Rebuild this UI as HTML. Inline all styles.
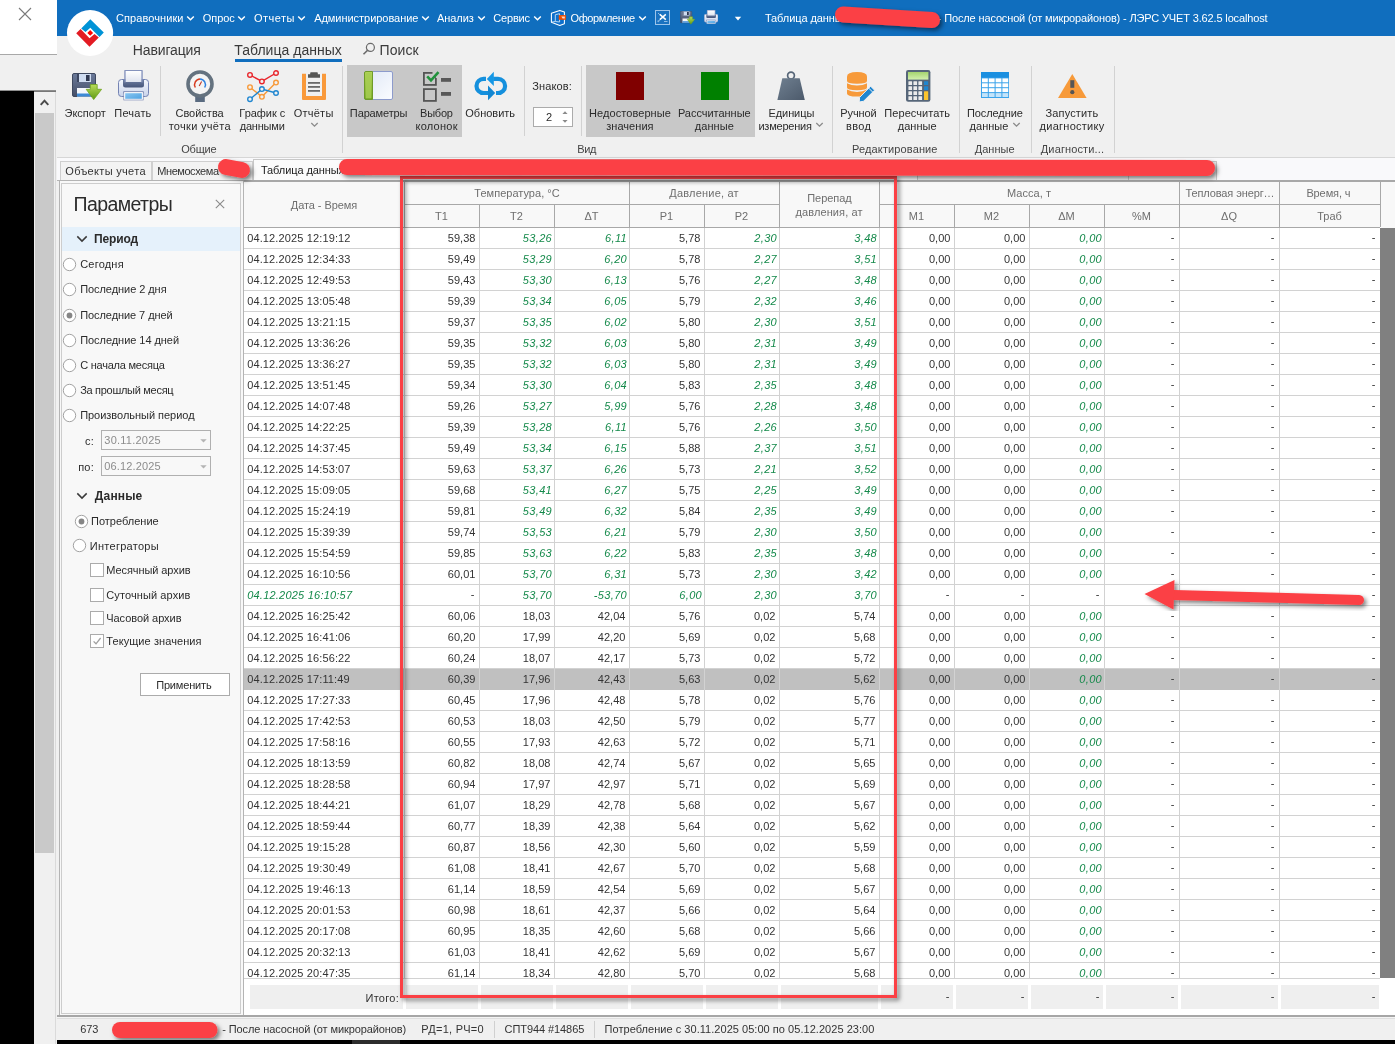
<!DOCTYPE html><html lang="ru"><head><meta charset="utf-8"><title>ЛЭРС УЧЕТ</title><style>
html,body{margin:0;padding:0}
body{width:1395px;height:1044px;position:relative;overflow:hidden;background:#f0f0f0;font-family:"Liberation Sans","DejaVu Sans",sans-serif;font-size:11px;color:#2b2b2b;line-height:13px;will-change:transform}
div,span,svg{position:absolute;box-sizing:border-box;white-space:nowrap}
.c{text-align:center}
.r{text-align:right}
.w{color:#fff}
.g{color:#14894a;font-style:italic}
.hd{color:#6e6e6e}
.cell{height:21px;line-height:21px;top:0;color:#333}
.cell.g{color:#14894a}
.row{left:0;width:1136px;height:21px}
</style></head><body>
<div style="left:0px;top:0px;width:57px;height:54px;background:#ffffff;"></div>
<svg style="left:17px;top:6px" width="16" height="16" viewBox="0 0 16 16"><path d="M2 2 L14 14 M14 2 L2 14" stroke="#7a7a7a" stroke-width="1.1" fill="none"/></svg>
<div style="left:0px;top:54px;width:57px;height:1px;background:#a8a8a8;"></div>
<div style="left:0px;top:55px;width:57px;height:35px;background:#f0f0f0;"></div>
<div style="left:0px;top:91px;width:34px;height:953px;background:#000000;"></div>
<div style="left:34px;top:91px;width:22px;height:953px;background:#f0f0f0;"></div>
<div style="left:55px;top:92px;width:1px;height:952px;background:#dadada;"></div>
<div style="left:0px;top:90px;width:56px;height:1px;background:#8e8e8e;"></div>
<div style="left:34px;top:91px;width:22px;height:1px;background:#777777;"></div>
<svg style="left:38px;top:97px" width="14" height="10" viewBox="0 0 14 10"><path d="M2.7 7.9 L6.5 3.7 L10.3 7.9" stroke="#4a4a4a" stroke-width="2" fill="none"/></svg>
<div style="left:35px;top:113px;width:19px;height:740px;background:#c9c9c9;"></div>
<div style="left:57px;top:0px;width:1338px;height:36px;background:#106ebe;"></div>
<div style="top:11.13px;height:14px;line-height:14px;color:#fff;left:115.95px;letter-spacing:0.087px;">Справочники</div>
<svg style="left:186.2px;top:14.5px" width="9" height="7" viewBox="0 0 9 7"><path d="M1.2 1.5 L4.5 4.8 L7.8 1.5" stroke="#fff" stroke-width="1.5" fill="none"/></svg>
<div style="top:11.13px;height:14px;line-height:14px;color:#fff;left:202.75px;letter-spacing:-0.050px;">Опрос</div>
<svg style="left:237.0px;top:14.5px" width="9" height="7" viewBox="0 0 9 7"><path d="M1.2 1.5 L4.5 4.8 L7.8 1.5" stroke="#fff" stroke-width="1.5" fill="none"/></svg>
<div style="top:11.13px;height:14px;line-height:14px;color:#fff;left:253.95px;letter-spacing:0.496px;">Отчеты</div>
<svg style="left:297.3px;top:14.5px" width="9" height="7" viewBox="0 0 9 7"><path d="M1.2 1.5 L4.5 4.8 L7.8 1.5" stroke="#fff" stroke-width="1.5" fill="none"/></svg>
<div style="top:11.13px;height:14px;line-height:14px;color:#fff;left:314.15px;letter-spacing:-0.035px;">Администрирование</div>
<svg style="left:420.7px;top:14.5px" width="9" height="7" viewBox="0 0 9 7"><path d="M1.2 1.5 L4.5 4.8 L7.8 1.5" stroke="#fff" stroke-width="1.5" fill="none"/></svg>
<div style="top:11.13px;height:14px;line-height:14px;color:#fff;left:437.05px;letter-spacing:-0.089px;">Анализ</div>
<svg style="left:476.5px;top:14.5px" width="9" height="7" viewBox="0 0 9 7"><path d="M1.2 1.5 L4.5 4.8 L7.8 1.5" stroke="#fff" stroke-width="1.5" fill="none"/></svg>
<div style="top:11.13px;height:14px;line-height:14px;color:#fff;left:493.25px;letter-spacing:-0.178px;">Сервис</div>
<svg style="left:532.5px;top:14.5px" width="9" height="7" viewBox="0 0 9 7"><path d="M1.2 1.5 L4.5 4.8 L7.8 1.5" stroke="#fff" stroke-width="1.5" fill="none"/></svg>
<div style="top:11.13px;height:14px;line-height:14px;color:#fff;left:570.55px;letter-spacing:-0.408px;">Оформление</div>
<svg style="left:638.1px;top:14.5px" width="9" height="7" viewBox="0 0 9 7"><path d="M1.2 1.5 L4.5 4.8 L7.8 1.5" stroke="#fff" stroke-width="1.5" fill="none"/></svg>
<div style="top:11.13px;height:14px;line-height:14px;color:#fff;left:764.95px;letter-spacing:-0.091px;">Таблица данных</div>
<div style="top:11.13px;height:14px;line-height:14px;color:#fff;left:937.85px;letter-spacing:-0.147px;">- После насосной (от микрорайонов) - ЛЭРС УЧЕТ 3.62.5 localhost</div>
<div style="left:57px;top:36px;width:1338px;height:121px;background:#f0f0f0;"></div>
<div style="top:41.06px;height:18px;line-height:18px;font-size:14px;color:#3a3a3a;left:132.85px;letter-spacing:-0.140px;">Навигация</div>
<div style="top:41.06px;height:18px;line-height:18px;font-size:14px;color:#3a3a3a;left:234.25px;letter-spacing:0.024px;">Таблица данных</div>
<div style="left:234.5px;top:58.5px;width:107.5px;height:3px;background:#106ebe;"></div>
<div style="top:41.06px;height:18px;line-height:18px;font-size:14px;color:#3a3a3a;left:379.55px;letter-spacing:0.061px;">Поиск</div>
<svg style="left:361.5px;top:41.7px" width="14" height="14" viewBox="0 0 14 14"><circle cx="8.4" cy="5.4" r="4" stroke="#6a6a6a" stroke-width="1.2" fill="none"/><path d="M5.6 8.2 L1.5 12.3" stroke="#6a6a6a" stroke-width="1.6"/></svg>
<div style="left:57px;top:157px;width:1338px;height:1px;background:#d6d6d6;"></div>
<svg style="left:66px;top:9px" width="48" height="48" viewBox="0 0 48 48"><circle cx="24.05" cy="24" r="23.1" fill="#ffffff"/><path d="M24.3 10.2 L37.8 23.6 L33.5 28 L24.3 18.8 L19.5 23.1 L15.2 19.5 Z" fill="#0093d6"/><path d="M14.6 20 L23.5 29.2 L28.5 24.9 L32.8 28.5 L23.5 37.8 L10.2 24.3 Z" fill="#e31b23"/><path d="M21.3 23.9 L24.2 21 L27.1 23.9 L24.2 26.8 Z" fill="#ff0000"/></svg>
<div style="left:347px;top:65px;width:115px;height:71.5px;background:#c8c8c8;"></div>
<div style="left:586px;top:65px;width:169px;height:71.5px;background:#c8c8c8;"></div>
<div style="left:160px;top:66px;width:1px;height:70px;background:#d2d2d2;"></div>
<div style="left:342px;top:66px;width:1px;height:87px;background:#d2d2d2;"></div>
<div style="left:524px;top:66px;width:1px;height:70px;background:#d2d2d2;"></div>
<div style="left:581px;top:66px;width:1px;height:70px;background:#d2d2d2;"></div>
<div style="left:832px;top:66px;width:1px;height:87px;background:#d2d2d2;"></div>
<div style="left:959px;top:66px;width:1px;height:87px;background:#d2d2d2;"></div>
<div style="left:1031px;top:66px;width:1px;height:87px;background:#d2d2d2;"></div>
<div style="left:1114px;top:66px;width:1px;height:87px;background:#d2d2d2;"></div>
<div style="top:106.13px;height:14px;line-height:14px;left:-64.80px;width:300px;text-align:center;letter-spacing:0.010px;">Экспорт</div>
<div style="top:106.13px;height:14px;line-height:14px;left:-17.09px;width:300px;text-align:center;letter-spacing:0.211px;">Печать</div>
<div style="top:106.13px;height:14px;line-height:14px;left:49.60px;width:300px;text-align:center;">Свойства</div>
<div style="top:119.13px;height:14px;line-height:14px;left:49.75px;width:300px;text-align:center;letter-spacing:0.299px;">точки учёта</div>
<div style="top:106.13px;height:14px;line-height:14px;left:112.29px;width:300px;text-align:center;letter-spacing:-0.030px;">График с</div>
<div style="top:119.13px;height:14px;line-height:14px;left:112.20px;width:300px;text-align:center;letter-spacing:-0.200px;">данными</div>
<div style="top:106.13px;height:14px;line-height:14px;left:163.63px;width:300px;text-align:center;letter-spacing:0.252px;">Отчёты</div>
<div style="top:106.13px;height:14px;line-height:14px;left:228.64px;width:300px;text-align:center;letter-spacing:-0.126px;">Параметры</div>
<div style="top:106.13px;height:14px;line-height:14px;left:286.37px;width:300px;text-align:center;letter-spacing:-0.256px;">Выбор</div>
<div style="top:119.13px;height:14px;line-height:14px;left:286.64px;width:300px;text-align:center;letter-spacing:0.275px;">колонок</div>
<div style="top:106.13px;height:14px;line-height:14px;left:340.19px;width:300px;text-align:center;letter-spacing:-0.013px;">Обновить</div>
<div style="top:106.13px;height:14px;line-height:14px;left:479.94px;width:300px;text-align:center;letter-spacing:0.074px;">Недостоверные</div>
<div style="top:119.13px;height:14px;line-height:14px;left:479.92px;width:300px;text-align:center;letter-spacing:0.048px;">значения</div>
<div style="top:106.13px;height:14px;line-height:14px;left:564.29px;width:300px;text-align:center;letter-spacing:-0.029px;">Рассчитанные</div>
<div style="top:119.13px;height:14px;line-height:14px;left:564.36px;width:300px;text-align:center;letter-spacing:0.115px;">данные</div>
<div style="top:106.13px;height:14px;line-height:14px;left:641.36px;width:300px;text-align:center;letter-spacing:-0.089px;">Единицы</div>
<div style="top:106.13px;height:14px;line-height:14px;left:708.46px;width:300px;text-align:center;letter-spacing:-0.084px;">Ручной</div>
<div style="top:119.13px;height:14px;line-height:14px;left:708.69px;width:300px;text-align:center;letter-spacing:0.385px;">ввод</div>
<div style="top:106.13px;height:14px;line-height:14px;left:767.24px;width:300px;text-align:center;letter-spacing:0.075px;">Пересчитать</div>
<div style="top:119.13px;height:14px;line-height:14px;left:767.22px;width:300px;text-align:center;letter-spacing:0.032px;">данные</div>
<div style="top:106.13px;height:14px;line-height:14px;left:844.86px;width:300px;text-align:center;letter-spacing:-0.075px;">Последние</div>
<div style="top:106.13px;height:14px;line-height:14px;left:921.98px;width:300px;text-align:center;letter-spacing:0.150px;">Запустить</div>
<div style="top:119.13px;height:14px;line-height:14px;left:922.03px;width:300px;text-align:center;letter-spacing:0.263px;">диагностику</div>
<div style="top:119.13px;height:14px;line-height:14px;left:758.45px;letter-spacing:-0.220px;">измерения</div>
<div style="top:119.13px;height:14px;line-height:14px;left:969.55px;letter-spacing:0.032px;">данные</div>
<div style="top:142.03px;height:14px;line-height:14px;color:#444;left:48.80px;width:300px;text-align:center;letter-spacing:-0.194px;">Общие</div>
<div style="top:142.03px;height:14px;line-height:14px;color:#444;left:436.68px;width:300px;text-align:center;letter-spacing:-0.433px;">Вид</div>
<div style="top:142.03px;height:14px;line-height:14px;color:#444;left:744.86px;width:300px;text-align:center;letter-spacing:0.122px;">Редактирование</div>
<div style="top:142.03px;height:14px;line-height:14px;color:#444;left:844.61px;width:300px;text-align:center;letter-spacing:0.027px;">Данные</div>
<div style="top:142.03px;height:14px;line-height:14px;color:#444;left:922.46px;width:300px;text-align:center;letter-spacing:0.128px;">Диагности...</div>
<svg style="left:309.7px;top:121.8px" width="9" height="6" viewBox="0 0 9 6"><path d="M1.3 1 L4.5 4.2 L7.7 1" stroke="#8a8a8a" stroke-width="1.3" fill="none"/></svg>
<svg style="left:814.7px;top:121.8px" width="9" height="6" viewBox="0 0 9 6"><path d="M1.3 1 L4.5 4.2 L7.7 1" stroke="#8a8a8a" stroke-width="1.3" fill="none"/></svg>
<svg style="left:1011.6px;top:121.8px" width="9" height="6" viewBox="0 0 9 6"><path d="M1.3 1 L4.5 4.2 L7.7 1" stroke="#8a8a8a" stroke-width="1.3" fill="none"/></svg>
<div style="top:78.93px;height:14px;line-height:14px;left:532.15px;letter-spacing:0.159px;">Знаков:</div>
<div style="left:533px;top:107px;width:40px;height:20px;background:#ffffff;border:1px solid #ababab;"></div>
<div style="top:110.13px;height:14px;line-height:14px;left:546.05px;letter-spacing:0.282px;">2</div>
<svg style="left:560.9px;top:109px" width="8" height="16" viewBox="0 0 8 16"><path d="M1.4 5 L4 2.2 L6.6 5 Z M1.4 10.9 L4 13.7 L6.6 10.9 Z" fill="#8a8a8a"/></svg>
<div style="left:616px;top:72px;width:28px;height:28px;background:#800000;"></div>
<div style="left:701px;top:72px;width:28px;height:28px;background:#008000;"></div>
<svg style="left:0;top:0" width="0" height="0"><defs><linearGradient id="gfl" x1="0" y1="0" x2="0" y2="1"><stop offset="0" stop-color="#6b7a9a"/><stop offset="1" stop-color="#454f68"/></linearGradient><linearGradient id="ggr" x1="0" y1="0" x2="0" y2="1"><stop offset="0" stop-color="#b9dc5a"/><stop offset="1" stop-color="#5f9a12"/></linearGradient><linearGradient id="gpa" x1="0" y1="0" x2="0" y2="1"><stop offset="0" stop-color="#ffffff"/><stop offset="1" stop-color="#dfe4ef"/></linearGradient><linearGradient id="gpb" x1="0" y1="0" x2="0" y2="1"><stop offset="0" stop-color="#f4f7fd"/><stop offset="1" stop-color="#c9d3ea"/></linearGradient><linearGradient id="gsl" x1="0" y1="0" x2="0" y2="1"><stop offset="0" stop-color="#6c7ca0"/><stop offset="1" stop-color="#46557a"/></linearGradient><linearGradient id="gbl" x1="0" y1="0" x2="1" y2="1"><stop offset="0" stop-color="#8cc8f2"/><stop offset="1" stop-color="#4a9fe0"/></linearGradient><linearGradient id="gwt" x1="0" y1="0" x2="1" y2="1"><stop offset="0" stop-color="#6f7f90"/><stop offset="1" stop-color="#4c5a6b"/></linearGradient><linearGradient id="gpn" x1="0" y1="0" x2="1" y2="1"><stop offset="0" stop-color="#dfe7f6"/><stop offset="1" stop-color="#fbfcff"/></linearGradient><linearGradient id="gdp" x1="0" y1="0" x2="0" y2="1"><stop offset="0" stop-color="#a5d46f"/><stop offset="1" stop-color="#d3f0ae"/></linearGradient></defs></svg>
<svg style="left:72px;top:73px" width="31.0" height="28.0" viewBox="0 0 31 28"><rect x="0.5" y="0.5" width="23" height="23" rx="1.5" fill="url(#gfl)" stroke="#3f4960"/><rect x="5" y="1" width="14" height="8" fill="#cfdcf0"/><rect x="5" y="1" width="2" height="8" fill="#3d4761"/><rect x="14" y="2" width="3.6" height="6" fill="#2f3850"/><rect x="5" y="15" width="14" height="8.5" fill="#f4f7fc"/><rect x="5" y="20.5" width="14" height="3" fill="#3d8ad6"/><path d="M18.3 11.5 L25.2 11.5 L25.2 16.3 L29.6 16.3 L21.7 26.6 L14.2 16.3 L18.3 16.3 Z" fill="url(#ggr)" stroke="#6fa31c" stroke-width="0.8"/></svg>
<svg style="left:117.5px;top:69.5px" width="31.0" height="31.0" viewBox="0 0 31 31"><rect x="7" y="0.5" width="17" height="12" fill="url(#gpa)" stroke="#8593bd" stroke-width="1"/><rect x="0.5" y="9.5" width="30" height="17" rx="3" fill="url(#gpb)" stroke="#7483b3"/><path d="M5 10 H26 V15 Q26 17.5 23.5 17.5 H7.5 Q5 17.5 5 15 Z" fill="url(#gsl)"/><rect x="7.5" y="1" width="16" height="11" fill="url(#gpa)"/><path d="M7 12.5 V0.5 H24 V12.5" fill="none" stroke="#8593bd"/><rect x="5.5" y="21.5" width="20" height="2" fill="#5b6b97"/><rect x="6.5" y="22.5" width="18" height="7" fill="url(#gbl)" stroke="#ffffff" stroke-width="1.4"/><rect x="5.8" y="21.8" width="19.4" height="8.2" fill="none" stroke="#6b7aaa" stroke-width="0.6"/></svg>
<svg style="left:186px;top:69.5px" width="28" height="32" viewBox="0 0 28 32" ><rect x="9.2" y="24" width="9.6" height="8" fill="#5a6b80"/><circle cx="14" cy="14" r="12" fill="#f4f4f4" stroke="#64727f" stroke-width="3.6"/><path d="M9.3 17.5 A5.8 5.8 0 0 1 14 8.9" fill="none" stroke="#d63a1e" stroke-width="1.5"/><path d="M14 8.9 A5.8 5.8 0 0 1 18.7 17.5" fill="none" stroke="#2b7fe0" stroke-width="1.5"/><path d="M13.2 16 L15.6 11.6" stroke="#c03a2a" stroke-width="1.1"/></svg>
<svg style="left:246px;top:70px" width="34" height="34" viewBox="0 0 34 34" ><path d="M4 17.2 L15.9 26.8 L30 12.6" fill="none" stroke="#f79a3a" stroke-width="1.4"/><circle cx="4" cy="17.2" r="2.3" fill="#f0f0f0" stroke="#f79a3a" stroke-width="1.4"/><circle cx="15.9" cy="26.8" r="2.3" fill="#f0f0f0" stroke="#f79a3a" stroke-width="1.4"/><circle cx="30" cy="12.6" r="2.3" fill="#f0f0f0" stroke="#f79a3a" stroke-width="1.4"/><path d="M4 29.2 L15.9 19.1 L30 23" fill="none" stroke="#1f86d0" stroke-width="1.4"/><circle cx="4" cy="29.2" r="2.3" fill="#f0f0f0" stroke="#1f86d0" stroke-width="1.4"/><circle cx="15.9" cy="19.1" r="2.3" fill="#f0f0f0" stroke="#1f86d0" stroke-width="1.4"/><circle cx="30" cy="23" r="2.3" fill="#f0f0f0" stroke="#1f86d0" stroke-width="1.4"/><path d="M4 4.9 L15.9 11.4 L30 3" fill="none" stroke="#e8262c" stroke-width="1.4"/><circle cx="4" cy="4.9" r="2.3" fill="#f0f0f0" stroke="#e8262c" stroke-width="1.4"/><circle cx="15.9" cy="11.4" r="2.3" fill="#f0f0f0" stroke="#e8262c" stroke-width="1.4"/><circle cx="30" cy="3" r="2.3" fill="#f0f0f0" stroke="#e8262c" stroke-width="1.4"/></svg>
<svg style="left:296px;top:66px" width="36" height="38" viewBox="0 0 36 38" ><path d="M6 7.8 H10 V30 H26 V7.8 H30 V33 Q30 34 29 34 H7 Q6 34 6 33 Z" fill="#f9993a"/><path d="M12 8.2 H14.2 V7 Q14.2 6.2 15 6.2 H21 Q21.8 6.2 21.8 7 V8.2 H24 V11.8 H12 Z" fill="#565654"/><rect x="12" y="16" width="12" height="1.8" fill="#6a6a6a"/><rect x="12" y="20" width="12" height="1.8" fill="#6a6a6a"/><rect x="12" y="24" width="12" height="1.8" fill="#6a6a6a"/></svg>
<svg style="left:364px;top:71px" width="29" height="29" viewBox="0 0 29 29" ><rect x="0.5" y="0.5" width="28" height="28" rx="1.5" fill="url(#gpn)" stroke="#8d9bcc"/><path d="M2 0.5 H8.5 V28.5 H2 Q0.5 28.5 0.5 27 V2 Q0.5 0.5 2 0.5 Z" fill="url(#ggr)" stroke="#6f9a2a"/><rect x="1.5" y="1.5" width="6" height="26" fill="#a6cc52" opacity="0.9"/></svg>
<svg style="left:415px;top:66px" width="42" height="38" viewBox="0 0 42 38" ><rect x="8.9" y="6.9" width="12" height="12" fill="none" stroke="#555555" stroke-width="1.8"/><rect x="8.9" y="23.1" width="12" height="11.8" fill="none" stroke="#555555" stroke-width="1.8"/><rect x="26" y="12" width="10" height="3.8" fill="#585858"/><rect x="26" y="26" width="10" height="3.8" fill="#585858"/><path d="M17.5 6.9 H22 V12" stroke="#c8c8c8" stroke-width="2.4" fill="none"/><path d="M12.2 10.4 L16 14.3 L23.5 6.2" fill="none" stroke="#21923c" stroke-width="2.6"/></svg>
<svg style="left:470px;top:66px" width="42" height="38" viewBox="0 0 42 38" ><path d="M16 12.8 H13.6 A7.1 7.1 0 0 0 13.6 27 H18.6" fill="none" stroke="#1590dd" stroke-width="4.2"/><path d="M18 19.6 L25.2 27.1 L18 34.2 Z" fill="#1387d2"/><path d="M26 27 H28 A7.1 7.1 0 0 0 28 12.8 H23.2" fill="none" stroke="#1590dd" stroke-width="4.2"/><path d="M23.8 5.8 L16.8 12.9 L23.8 20 Z" fill="#1597e5"/></svg>
<svg style="left:777px;top:71px" width="28" height="29" viewBox="0 0 28 29" ><circle cx="14" cy="4.6" r="3.4" fill="none" stroke="#566577" stroke-width="1.7"/><path d="M5.3 7.3 H22.7 L27.8 29 H0.4 Z" fill="url(#gwt)"/></svg>
<svg style="left:847px;top:71.7px" width="29" height="31" viewBox="0 0 29 31" ><path d="M0 4.5 Q0 0 10 0 Q20 0 20 4.5 V9 Q20 11.8 10 11.8 Q0 11.8 0 9 Z" fill="#f79a3a"/><path d="M0 11.2 Q4 13.6 10 13.6 Q16 13.6 20 11.2 V15.5 Q20 18.2 10 18.2 Q0 18.2 0 15.5 Z" fill="#f79a3a"/><path d="M0 17.6 Q4 20 10 20 Q16 20 20 17.6 V21.5 Q20 24.6 10 24.6 Q0 24.6 0 21.5 Z" fill="#f79a3a"/><path d="M23.6 14.2 L27.6 18.2 L16.5 29.3 L12.2 30 L12.6 25.4 Z" fill="#1f86d0" stroke="#f0f0f0" stroke-width="1"/><path d="M21.8 16.2 L25.6 20" stroke="#f0f0f0" stroke-width="1"/></svg>
<svg style="left:906px;top:70px" width="25" height="32" viewBox="0 0 25 32" ><rect x="0" y="0" width="24.4" height="31.8" rx="2.2" fill="#566679"/><rect x="2" y="2" width="20.4" height="7.6" fill="url(#gdp)"/><rect x="2.4" y="11.2" width="3.7" height="3.7" rx="0.5" fill="#ececec"/><rect x="7.4" y="11.2" width="3.7" height="3.7" rx="0.5" fill="#ececec"/><rect x="12.4" y="11.2" width="3.7" height="3.7" rx="0.5" fill="#ececec"/><rect x="2.4" y="16.2" width="3.7" height="3.7" rx="0.5" fill="#ececec"/><rect x="7.4" y="16.2" width="3.7" height="3.7" rx="0.5" fill="#ececec"/><rect x="12.4" y="16.2" width="3.7" height="3.7" rx="0.5" fill="#ececec"/><rect x="2.4" y="21.2" width="3.7" height="3.7" rx="0.5" fill="#ececec"/><rect x="7.4" y="21.2" width="3.7" height="3.7" rx="0.5" fill="#ececec"/><rect x="12.4" y="21.2" width="3.7" height="3.7" rx="0.5" fill="#ececec"/><rect x="2.4" y="26.2" width="3.7" height="3.7" rx="0.5" fill="#ececec"/><rect x="7.4" y="26.2" width="3.7" height="3.7" rx="0.5" fill="#ececec"/><rect x="12.4" y="26.2" width="3.7" height="3.7" rx="0.5" fill="#ececec"/><rect x="18" y="11.2" width="4.2" height="3.9" rx="0.5" fill="#1f86d0"/><rect x="18" y="16.2" width="4.2" height="3.9" rx="0.5" fill="#1f86d0"/><rect x="18" y="21.2" width="4.2" height="8.7" rx="0.5" fill="#fdc42d"/></svg>
<svg style="left:981px;top:72px" width="28" height="26" viewBox="0 0 28 26" ><rect x="0" y="0" width="28" height="26" fill="#3aa3ea"/><rect x="0" y="0" width="28" height="5.6" fill="#1a8fe0"/><rect x="1.0" y="6.4" width="5.8" height="3.9" fill="#ffffff"/><rect x="7.8" y="6.4" width="5.8" height="3.9" fill="#ffffff"/><rect x="14.6" y="6.4" width="5.8" height="3.9" fill="#ffffff"/><rect x="21.4" y="6.4" width="5.8" height="3.9" fill="#ffffff"/><rect x="1.0" y="11.3" width="5.8" height="3.9" fill="#ffffff"/><rect x="7.8" y="11.3" width="5.8" height="3.9" fill="#ffffff"/><rect x="14.6" y="11.3" width="5.8" height="3.9" fill="#ffffff"/><rect x="21.4" y="11.3" width="5.8" height="3.9" fill="#ffffff"/><rect x="1.0" y="16.200000000000003" width="5.8" height="3.9" fill="#ffffff"/><rect x="7.8" y="16.200000000000003" width="5.8" height="3.9" fill="#ffffff"/><rect x="14.6" y="16.200000000000003" width="5.8" height="3.9" fill="#ffffff"/><rect x="21.4" y="16.200000000000003" width="5.8" height="3.9" fill="#ffffff"/><rect x="1.0" y="21.1" width="5.8" height="3.9" fill="#c4e4fa"/><rect x="7.8" y="21.1" width="5.8" height="3.9" fill="#c4e4fa"/><rect x="14.6" y="21.1" width="5.8" height="3.9" fill="#c4e4fa"/><rect x="21.4" y="21.1" width="5.8" height="3.9" fill="#c4e4fa"/></svg>
<svg style="left:1057.7px;top:73.8px" width="29" height="24" viewBox="0 0 29 24" ><path d="M14.3 0 L28.6 24 H0 Z" fill="#f79a3a"/><rect x="12.3" y="6.2" width="4" height="7.6" fill="#565656"/><circle cx="14.3" cy="18.2" r="2.1" fill="#565656"/></svg>
<svg style="left:546px;top:6px" width="28" height="24" viewBox="0 0 28 24" ><path d="M5.4 7.2 L13.8 4.4 L18.4 5.9 V17.8 L13.8 19.4 L5.4 16.3 Z" fill="#0c6fcc" stroke="#ffffff" stroke-width="1.05" stroke-linejoin="round"/><path d="M9.3 8.7 L13.6 7.7 V16 L9.3 15.5 Z M6 16 L9.3 15.5" fill="none" stroke="#b4d6f2" stroke-width="1"/><rect x="12.8" y="9.1" width="7.1" height="4.7" fill="#f04e00"/><path d="M15.3 10.4 H18.8 V12.6 H16.6 Z" fill="#fbd9c8"/></svg>
<svg style="left:655px;top:10px" width="15" height="15" viewBox="0 0 15 15" ><rect x="0.5" y="0.5" width="14" height="14" fill="#1a72c0" stroke="#9cc4ea" stroke-width="1"/><path d="M4.8 4.4 L10.8 9.6 M10.8 4.4 L4.8 9.6" stroke="#ffffff" stroke-width="1.5"/><path d="M3 3 L5 5 M3 11.5 L5 9.8 M9 11.5 H12.5" stroke="#9cc4ea" stroke-width="0.9"/><circle cx="3.3" cy="11.3" r="1" fill="#7fb2e2"/></svg>
<svg style="left:680.3px;top:11.2px" width="15.5" height="14.0" viewBox="0 0 31 28"><rect x="0.5" y="0.5" width="23" height="23" rx="1.5" fill="url(#gfl)" stroke="#3f4960"/><rect x="5" y="1" width="14" height="8" fill="#cfdcf0"/><rect x="5" y="1" width="2" height="8" fill="#3d4761"/><rect x="14" y="2" width="3.6" height="6" fill="#2f3850"/><rect x="5" y="15" width="14" height="8.5" fill="#f4f7fc"/><rect x="5" y="20.5" width="14" height="3" fill="#3d8ad6"/><path d="M18.3 11.5 L25.2 11.5 L25.2 16.3 L29.6 16.3 L21.7 26.6 L14.2 16.3 L18.3 16.3 Z" fill="url(#ggr)" stroke="#6fa31c" stroke-width="0.8"/></svg>
<svg style="left:704px;top:10.2px" width="14.26" height="14.26" viewBox="0 0 31 31"><rect x="7" y="0.5" width="17" height="12" fill="url(#gpa)" stroke="#8593bd" stroke-width="1"/><rect x="0.5" y="9.5" width="30" height="17" rx="3" fill="url(#gpb)" stroke="#7483b3"/><path d="M5 10 H26 V15 Q26 17.5 23.5 17.5 H7.5 Q5 17.5 5 15 Z" fill="url(#gsl)"/><rect x="7.5" y="1" width="16" height="11" fill="url(#gpa)"/><path d="M7 12.5 V0.5 H24 V12.5" fill="none" stroke="#8593bd"/><rect x="5.5" y="21.5" width="20" height="2" fill="#5b6b97"/><rect x="6.5" y="22.5" width="18" height="7" fill="url(#gbl)" stroke="#ffffff" stroke-width="1.4"/><rect x="5.8" y="21.8" width="19.4" height="8.2" fill="none" stroke="#6b7aaa" stroke-width="0.6"/></svg>
<svg style="left:734px;top:16px" width="8" height="5" viewBox="0 0 8 5"><path d="M0.8 0.8 H7.2 L4 4.4 Z" fill="#ffffff"/></svg>
<div style="left:57px;top:158px;width:1338px;height:23px;background:#f9f9fb;"></div>
<div style="left:60px;top:161px;width:92px;height:20px;background:#f3f3f3;border:1px solid #cfcfcf;border-bottom:none;"></div>
<div style="top:164.13px;height:14px;line-height:14px;color:#333;left:65.25px;letter-spacing:0.320px;">Объекты учета</div>
<div style="left:152px;top:161px;width:101px;height:20px;background:#f3f3f3;border:1px solid #cfcfcf;border-bottom:none;"></div>
<div style="top:164.13px;height:14px;line-height:14px;color:#333;left:157.35px;letter-spacing:-0.451px;">Мнемосхема</div>
<div style="left:253px;top:159px;width:665px;height:22px;background:#fbfbfb;border:1px solid #c8c8c8;border-bottom:none;"></div>
<div style="left:917px;top:161px;width:212px;height:20px;background:#f1f1f1;border:1px solid #c8c8c8;border-bottom:none;"></div>
<div style="left:1128px;top:161px;width:89px;height:20px;background:#f1f1f1;border:1px solid #c8c8c8;border-bottom:none;"></div>
<div style="left:918px;top:180px;width:299px;height:1px;background:#b4b4b4;"></div>
<div style="top:162.83px;height:14px;line-height:14px;color:#222;left:260.95px;letter-spacing:-0.091px;">Таблица данных</div>
<div style="left:57px;top:180px;width:196px;height:1px;background:#b4b4b4;"></div>
<div style="left:1217px;top:180px;width:178px;height:1px;background:#b4b4b4;"></div>
<div style="left:59px;top:180px;width:185px;height:837px;background:#f8f8f8;border:1px solid #b4b4b4;"></div>
<div style="left:61px;top:183px;width:180px;height:831px;background:#f8f8f8;border:1px solid #cdcdcd;"></div>
<div style="top:191.72px;height:25px;line-height:25px;font-size:19.5px;color:#2b2b2b;left:73.55px;letter-spacing:-0.600px;">Параметры</div>
<svg style="left:214.2px;top:198.3px" width="12" height="12" viewBox="0 0 12 12"><path d="M1.8 1.8 L10.2 10.2 M10.2 1.8 L1.8 10.2" stroke="#8a8a8a" stroke-width="1.1" fill="none"/></svg>
<div style="left:62px;top:227px;width:178px;height:24px;background:#e5f1fb;"></div>
<svg style="left:76px;top:234.8px" width="12" height="8" viewBox="0 0 12 8"><path d="M1.3 1.4 L6 6.1 L10.7 1.4" stroke="#3a3a3a" stroke-width="1.5" fill="none"/></svg>
<div style="top:231.14px;height:16px;line-height:16px;font-size:12px;font-weight:bold;left:93.95px;letter-spacing:-0.099px;">Период</div>
<svg style="left:62.3px;top:256.7px" width="15" height="15" viewBox="0 0 15 15"><circle cx="7.5" cy="7.5" r="6.2" fill="#fff" stroke="#a2a2a2" stroke-width="1"/></svg>
<div style="top:257.13px;height:14px;line-height:14px;left:80.15px;letter-spacing:0.220px;">Сегодня</div>
<svg style="left:62.3px;top:281.8px" width="15" height="15" viewBox="0 0 15 15"><circle cx="7.5" cy="7.5" r="6.2" fill="#fff" stroke="#a2a2a2" stroke-width="1"/></svg>
<div style="top:282.23px;height:14px;line-height:14px;left:80.15px;letter-spacing:-0.057px;">Последние 2 дня</div>
<svg style="left:62.3px;top:307.7px" width="15" height="15" viewBox="0 0 15 15"><circle cx="7.5" cy="7.5" r="6.2" fill="#fff" stroke="#a2a2a2" stroke-width="1"/><circle cx="7.5" cy="7.5" r="2.9" fill="#858585"/></svg>
<div style="top:308.13px;height:14px;line-height:14px;left:80.15px;letter-spacing:-0.066px;">Последние 7 дней</div>
<svg style="left:62.3px;top:332.5px" width="15" height="15" viewBox="0 0 15 15"><circle cx="7.5" cy="7.5" r="6.2" fill="#fff" stroke="#a2a2a2" stroke-width="1"/></svg>
<div style="top:332.93px;height:14px;line-height:14px;left:80.15px;letter-spacing:-0.046px;">Последние 14 дней</div>
<svg style="left:62.3px;top:357.7px" width="15" height="15" viewBox="0 0 15 15"><circle cx="7.5" cy="7.5" r="6.2" fill="#fff" stroke="#a2a2a2" stroke-width="1"/></svg>
<div style="top:358.13px;height:14px;line-height:14px;left:80.15px;letter-spacing:-0.230px;">С начала месяца</div>
<svg style="left:62.3px;top:382.5px" width="15" height="15" viewBox="0 0 15 15"><circle cx="7.5" cy="7.5" r="6.2" fill="#fff" stroke="#a2a2a2" stroke-width="1"/></svg>
<div style="top:382.93px;height:14px;line-height:14px;left:80.15px;letter-spacing:-0.287px;">За прошлый месяц</div>
<svg style="left:62.3px;top:407.5px" width="15" height="15" viewBox="0 0 15 15"><circle cx="7.5" cy="7.5" r="6.2" fill="#fff" stroke="#a2a2a2" stroke-width="1"/></svg>
<div style="top:407.93px;height:14px;line-height:14px;left:80.15px;letter-spacing:-0.026px;">Произвольный период</div>
<div style="top:433.93px;height:14px;line-height:14px;left:84.95px;letter-spacing:0.222px;">с:</div>
<div style="top:459.73px;height:14px;line-height:14px;left:78.15px;letter-spacing:0.223px;">по:</div>
<div style="left:101px;top:430px;width:110px;height:20px;background:#f8f8f8;border:1px solid #b0b0b0;"></div>
<div style="top:433.43px;height:14px;line-height:14px;color:#8c8c8c;left:104.35px;letter-spacing:0.226px;">30.11.2025</div>
<svg style="left:199.5px;top:438.5px" width="7" height="4" viewBox="0 0 7 4"><path d="M0.3 0.3 L3.5 3.6 L6.7 0.3 Z" fill="#b4b4b4"/></svg>
<div style="left:101px;top:456px;width:110px;height:20px;background:#f8f8f8;border:1px solid #b0b0b0;"></div>
<div style="top:459.43px;height:14px;line-height:14px;color:#8c8c8c;left:104.35px;letter-spacing:0.145px;">06.12.2025</div>
<svg style="left:199.5px;top:464.5px" width="7" height="4" viewBox="0 0 7 4"><path d="M0.3 0.3 L3.5 3.6 L6.7 0.3 Z" fill="#b4b4b4"/></svg>
<svg style="left:76px;top:492.2px" width="12" height="8" viewBox="0 0 12 8"><path d="M1.3 1.4 L6 6.1 L10.7 1.4" stroke="#3a3a3a" stroke-width="1.5" fill="none"/></svg>
<div style="top:488.44px;height:16px;line-height:16px;font-size:12px;font-weight:bold;left:94.85px;letter-spacing:0.160px;">Данные</div>
<svg style="left:73.6px;top:513.7px" width="15" height="15" viewBox="0 0 15 15"><circle cx="7.5" cy="7.5" r="6.2" fill="#fff" stroke="#a2a2a2" stroke-width="1"/><circle cx="7.5" cy="7.5" r="2.9" fill="#858585"/></svg>
<div style="top:514.13px;height:14px;line-height:14px;left:91.05px;">Потребление</div>
<svg style="left:72.4px;top:538.4px" width="15" height="15" viewBox="0 0 15 15"><circle cx="7.5" cy="7.5" r="6.2" fill="#fff" stroke="#a2a2a2" stroke-width="1"/></svg>
<div style="top:538.83px;height:14px;line-height:14px;left:89.85px;letter-spacing:0.266px;">Интеграторы</div>
<div style="left:90px;top:563px;width:14px;height:14px;background:#ffffff;border:1px solid #ababab;"></div>
<div style="top:562.93px;height:14px;line-height:14px;left:106.25px;letter-spacing:-0.077px;">Месячный архив</div>
<div style="left:90px;top:588px;width:14px;height:14px;background:#ffffff;border:1px solid #ababab;"></div>
<div style="top:588.13px;height:14px;line-height:14px;left:106.25px;letter-spacing:0.104px;">Суточный архив</div>
<div style="left:90px;top:611px;width:14px;height:14px;background:#ffffff;border:1px solid #ababab;"></div>
<div style="top:611.13px;height:14px;line-height:14px;left:106.25px;letter-spacing:-0.048px;">Часовой архив</div>
<div style="left:90px;top:634px;width:14px;height:14px;background:#ffffff;border:1px solid #ababab;"></div>
<svg style="left:91px;top:635px" width="12" height="12" viewBox="0 0 12 12"><path d="M2.6 6.4 L5 8.8 L9.6 3" stroke="#a0a0a0" stroke-width="1.3" fill="none"/></svg>
<div style="top:634.03px;height:14px;line-height:14px;left:106.25px;letter-spacing:0.079px;">Текущие значения</div>
<div style="left:140px;top:673px;width:90px;height:23px;background:#ffffff;border:1px solid #ababab;"></div>
<div style="top:678.13px;height:14px;line-height:14px;left:156.15px;letter-spacing:-0.160px;">Применить</div>
<div style="left:244px;top:181px;width:1151px;height:834px;background:#ffffff;"></div>
<div style="left:244px;top:181px;width:1136px;height:46px;background:#f8f8f8;"></div>
<div style="left:244px;top:180px;width:1151px;height:2px;background:#a8a8a8;"></div>
<div style="left:244px;top:227px;width:1136px;height:1px;background:#a8a8a8;"></div>
<div style="left:404px;top:204px;width:375px;height:1px;background:#a8a8a8;"></div>
<div style="left:879px;top:204px;width:501px;height:1px;background:#a8a8a8;"></div>
<div style="left:404px;top:181px;width:1px;height:46px;background:#a8a8a8;"></div>
<div style="left:629px;top:181px;width:1px;height:46px;background:#a8a8a8;"></div>
<div style="left:779px;top:181px;width:1px;height:46px;background:#a8a8a8;"></div>
<div style="left:879px;top:181px;width:1px;height:46px;background:#a8a8a8;"></div>
<div style="left:1179px;top:181px;width:1px;height:46px;background:#a8a8a8;"></div>
<div style="left:1279px;top:181px;width:1px;height:46px;background:#a8a8a8;"></div>
<div style="left:1380px;top:181px;width:1px;height:46px;background:#a8a8a8;"></div>
<div style="left:479px;top:204px;width:1px;height:23px;background:#a8a8a8;"></div>
<div style="left:554px;top:204px;width:1px;height:23px;background:#a8a8a8;"></div>
<div style="left:704px;top:204px;width:1px;height:23px;background:#a8a8a8;"></div>
<div style="left:954px;top:204px;width:1px;height:23px;background:#a8a8a8;"></div>
<div style="left:1029px;top:204px;width:1px;height:23px;background:#a8a8a8;"></div>
<div style="left:1104px;top:204px;width:1px;height:23px;background:#a8a8a8;"></div>
<div style="left:243px;top:181px;width:1px;height:834px;background:#b4b4b4;"></div>
<div style="top:198.33px;height:14px;line-height:14px;color:#6e6e6e;left:173.96px;width:300px;text-align:center;letter-spacing:-0.085px;">Дата - Время</div>
<div style="top:186.13px;height:14px;line-height:14px;color:#6e6e6e;left:367.01px;width:300px;text-align:center;letter-spacing:0.015px;">Температура, °C</div>
<div style="top:186.13px;height:14px;line-height:14px;color:#6e6e6e;left:554.10px;width:300px;text-align:center;letter-spacing:0.203px;">Давление, ат</div>
<div style="top:191.43px;height:14px;line-height:14px;color:#6e6e6e;left:679.47px;width:300px;text-align:center;letter-spacing:-0.050px;">Перепад</div>
<div style="top:204.63px;height:14px;line-height:14px;color:#6e6e6e;left:679.05px;width:300px;text-align:center;letter-spacing:0.103px;">давления, ат</div>
<div style="top:186.13px;height:14px;line-height:14px;color:#6e6e6e;left:879.01px;width:300px;text-align:center;letter-spacing:0.028px;">Масса, т</div>
<div style="top:186.13px;height:14px;line-height:14px;color:#6e6e6e;left:1079.95px;width:300px;text-align:center;letter-spacing:-0.101px;">Тепловая энерг…</div>
<div style="top:186.13px;height:14px;line-height:14px;color:#6e6e6e;left:1178.45px;width:300px;text-align:center;letter-spacing:-0.104px;">Время, ч</div>
<div style="top:209.23px;height:14px;line-height:14px;color:#6e6e6e;left:291.50px;width:300px;text-align:center;">T1</div>
<div style="top:209.23px;height:14px;line-height:14px;color:#6e6e6e;left:366.50px;width:300px;text-align:center;">T2</div>
<div style="top:209.23px;height:14px;line-height:14px;color:#6e6e6e;left:441.50px;width:300px;text-align:center;">ΔT</div>
<div style="top:209.23px;height:14px;line-height:14px;color:#6e6e6e;left:516.50px;width:300px;text-align:center;">P1</div>
<div style="top:209.23px;height:14px;line-height:14px;color:#6e6e6e;left:591.50px;width:300px;text-align:center;">P2</div>
<div style="top:209.23px;height:14px;line-height:14px;color:#6e6e6e;left:766.50px;width:300px;text-align:center;">M1</div>
<div style="top:209.23px;height:14px;line-height:14px;color:#6e6e6e;left:841.50px;width:300px;text-align:center;">M2</div>
<div style="top:209.23px;height:14px;line-height:14px;color:#6e6e6e;left:916.50px;width:300px;text-align:center;">ΔM</div>
<div style="top:209.23px;height:14px;line-height:14px;color:#6e6e6e;left:991.50px;width:300px;text-align:center;">%M</div>
<div style="top:209.23px;height:14px;line-height:14px;color:#6e6e6e;left:1079.00px;width:300px;text-align:center;">ΔQ</div>
<div style="top:209.23px;height:14px;line-height:14px;color:#6e6e6e;left:1179.50px;width:300px;text-align:center;">Траб</div>
<div style="left:244px;top:228px;width:1136px;height:751px;overflow:hidden;background:#fff">
<div class="row" style="top:0px;background:#ffffff">
<div class="cell" style="left:3.2px;letter-spacing:0.13px">04.12.2025 12:19:12</div>
<div class="cell r" style="left:160px;width:71.4px">59,38</div>
<div class="cell g r" style="left:235px;width:73.1px;letter-spacing:0.35px">53,26</div>
<div class="cell g r" style="left:310px;width:73.1px;letter-spacing:0.35px">6,11</div>
<div class="cell r" style="left:385px;width:71.4px">5,78</div>
<div class="cell g r" style="left:460px;width:73.1px;letter-spacing:0.35px">2,30</div>
<div class="cell g r" style="left:535px;width:98.1px;letter-spacing:0.35px">3,48</div>
<div class="cell r" style="left:635px;width:71.4px">0,00</div>
<div class="cell r" style="left:710px;width:71.4px">0,00</div>
<div class="cell g r" style="left:785px;width:73.1px;letter-spacing:0.35px">0,00</div>
<div class="cell r" style="left:860px;width:70.4px;top:-1px">-</div>
<div class="cell r" style="left:935px;width:95.4px;top:-1px">-</div>
<div class="cell r" style="left:1035px;width:96.4px;top:-1px">-</div>
</div>
<div style="left:0;top:20px;width:1136px;height:1px;background:#d2d2d2"></div>
<div class="row" style="top:21px;background:#ffffff">
<div class="cell" style="left:3.2px;letter-spacing:0.13px">04.12.2025 12:34:33</div>
<div class="cell r" style="left:160px;width:71.4px">59,49</div>
<div class="cell g r" style="left:235px;width:73.1px;letter-spacing:0.35px">53,29</div>
<div class="cell g r" style="left:310px;width:73.1px;letter-spacing:0.35px">6,20</div>
<div class="cell r" style="left:385px;width:71.4px">5,78</div>
<div class="cell g r" style="left:460px;width:73.1px;letter-spacing:0.35px">2,27</div>
<div class="cell g r" style="left:535px;width:98.1px;letter-spacing:0.35px">3,51</div>
<div class="cell r" style="left:635px;width:71.4px">0,00</div>
<div class="cell r" style="left:710px;width:71.4px">0,00</div>
<div class="cell g r" style="left:785px;width:73.1px;letter-spacing:0.35px">0,00</div>
<div class="cell r" style="left:860px;width:70.4px;top:-1px">-</div>
<div class="cell r" style="left:935px;width:95.4px;top:-1px">-</div>
<div class="cell r" style="left:1035px;width:96.4px;top:-1px">-</div>
</div>
<div style="left:0;top:41px;width:1136px;height:1px;background:#d2d2d2"></div>
<div class="row" style="top:42px;background:#ffffff">
<div class="cell" style="left:3.2px;letter-spacing:0.13px">04.12.2025 12:49:53</div>
<div class="cell r" style="left:160px;width:71.4px">59,43</div>
<div class="cell g r" style="left:235px;width:73.1px;letter-spacing:0.35px">53,30</div>
<div class="cell g r" style="left:310px;width:73.1px;letter-spacing:0.35px">6,13</div>
<div class="cell r" style="left:385px;width:71.4px">5,76</div>
<div class="cell g r" style="left:460px;width:73.1px;letter-spacing:0.35px">2,27</div>
<div class="cell g r" style="left:535px;width:98.1px;letter-spacing:0.35px">3,48</div>
<div class="cell r" style="left:635px;width:71.4px">0,00</div>
<div class="cell r" style="left:710px;width:71.4px">0,00</div>
<div class="cell g r" style="left:785px;width:73.1px;letter-spacing:0.35px">0,00</div>
<div class="cell r" style="left:860px;width:70.4px;top:-1px">-</div>
<div class="cell r" style="left:935px;width:95.4px;top:-1px">-</div>
<div class="cell r" style="left:1035px;width:96.4px;top:-1px">-</div>
</div>
<div style="left:0;top:62px;width:1136px;height:1px;background:#d2d2d2"></div>
<div class="row" style="top:63px;background:#ffffff">
<div class="cell" style="left:3.2px;letter-spacing:0.13px">04.12.2025 13:05:48</div>
<div class="cell r" style="left:160px;width:71.4px">59,39</div>
<div class="cell g r" style="left:235px;width:73.1px;letter-spacing:0.35px">53,34</div>
<div class="cell g r" style="left:310px;width:73.1px;letter-spacing:0.35px">6,05</div>
<div class="cell r" style="left:385px;width:71.4px">5,79</div>
<div class="cell g r" style="left:460px;width:73.1px;letter-spacing:0.35px">2,32</div>
<div class="cell g r" style="left:535px;width:98.1px;letter-spacing:0.35px">3,46</div>
<div class="cell r" style="left:635px;width:71.4px">0,00</div>
<div class="cell r" style="left:710px;width:71.4px">0,00</div>
<div class="cell g r" style="left:785px;width:73.1px;letter-spacing:0.35px">0,00</div>
<div class="cell r" style="left:860px;width:70.4px;top:-1px">-</div>
<div class="cell r" style="left:935px;width:95.4px;top:-1px">-</div>
<div class="cell r" style="left:1035px;width:96.4px;top:-1px">-</div>
</div>
<div style="left:0;top:83px;width:1136px;height:1px;background:#d2d2d2"></div>
<div class="row" style="top:84px;background:#ffffff">
<div class="cell" style="left:3.2px;letter-spacing:0.13px">04.12.2025 13:21:15</div>
<div class="cell r" style="left:160px;width:71.4px">59,37</div>
<div class="cell g r" style="left:235px;width:73.1px;letter-spacing:0.35px">53,35</div>
<div class="cell g r" style="left:310px;width:73.1px;letter-spacing:0.35px">6,02</div>
<div class="cell r" style="left:385px;width:71.4px">5,80</div>
<div class="cell g r" style="left:460px;width:73.1px;letter-spacing:0.35px">2,30</div>
<div class="cell g r" style="left:535px;width:98.1px;letter-spacing:0.35px">3,51</div>
<div class="cell r" style="left:635px;width:71.4px">0,00</div>
<div class="cell r" style="left:710px;width:71.4px">0,00</div>
<div class="cell g r" style="left:785px;width:73.1px;letter-spacing:0.35px">0,00</div>
<div class="cell r" style="left:860px;width:70.4px;top:-1px">-</div>
<div class="cell r" style="left:935px;width:95.4px;top:-1px">-</div>
<div class="cell r" style="left:1035px;width:96.4px;top:-1px">-</div>
</div>
<div style="left:0;top:104px;width:1136px;height:1px;background:#d2d2d2"></div>
<div class="row" style="top:105px;background:#ffffff">
<div class="cell" style="left:3.2px;letter-spacing:0.13px">04.12.2025 13:36:26</div>
<div class="cell r" style="left:160px;width:71.4px">59,35</div>
<div class="cell g r" style="left:235px;width:73.1px;letter-spacing:0.35px">53,32</div>
<div class="cell g r" style="left:310px;width:73.1px;letter-spacing:0.35px">6,03</div>
<div class="cell r" style="left:385px;width:71.4px">5,80</div>
<div class="cell g r" style="left:460px;width:73.1px;letter-spacing:0.35px">2,31</div>
<div class="cell g r" style="left:535px;width:98.1px;letter-spacing:0.35px">3,49</div>
<div class="cell r" style="left:635px;width:71.4px">0,00</div>
<div class="cell r" style="left:710px;width:71.4px">0,00</div>
<div class="cell g r" style="left:785px;width:73.1px;letter-spacing:0.35px">0,00</div>
<div class="cell r" style="left:860px;width:70.4px;top:-1px">-</div>
<div class="cell r" style="left:935px;width:95.4px;top:-1px">-</div>
<div class="cell r" style="left:1035px;width:96.4px;top:-1px">-</div>
</div>
<div style="left:0;top:125px;width:1136px;height:1px;background:#d2d2d2"></div>
<div class="row" style="top:126px;background:#ffffff">
<div class="cell" style="left:3.2px;letter-spacing:0.13px">04.12.2025 13:36:27</div>
<div class="cell r" style="left:160px;width:71.4px">59,35</div>
<div class="cell g r" style="left:235px;width:73.1px;letter-spacing:0.35px">53,32</div>
<div class="cell g r" style="left:310px;width:73.1px;letter-spacing:0.35px">6,03</div>
<div class="cell r" style="left:385px;width:71.4px">5,80</div>
<div class="cell g r" style="left:460px;width:73.1px;letter-spacing:0.35px">2,31</div>
<div class="cell g r" style="left:535px;width:98.1px;letter-spacing:0.35px">3,49</div>
<div class="cell r" style="left:635px;width:71.4px">0,00</div>
<div class="cell r" style="left:710px;width:71.4px">0,00</div>
<div class="cell g r" style="left:785px;width:73.1px;letter-spacing:0.35px">0,00</div>
<div class="cell r" style="left:860px;width:70.4px;top:-1px">-</div>
<div class="cell r" style="left:935px;width:95.4px;top:-1px">-</div>
<div class="cell r" style="left:1035px;width:96.4px;top:-1px">-</div>
</div>
<div style="left:0;top:146px;width:1136px;height:1px;background:#d2d2d2"></div>
<div class="row" style="top:147px;background:#ffffff">
<div class="cell" style="left:3.2px;letter-spacing:0.13px">04.12.2025 13:51:45</div>
<div class="cell r" style="left:160px;width:71.4px">59,34</div>
<div class="cell g r" style="left:235px;width:73.1px;letter-spacing:0.35px">53,30</div>
<div class="cell g r" style="left:310px;width:73.1px;letter-spacing:0.35px">6,04</div>
<div class="cell r" style="left:385px;width:71.4px">5,83</div>
<div class="cell g r" style="left:460px;width:73.1px;letter-spacing:0.35px">2,35</div>
<div class="cell g r" style="left:535px;width:98.1px;letter-spacing:0.35px">3,48</div>
<div class="cell r" style="left:635px;width:71.4px">0,00</div>
<div class="cell r" style="left:710px;width:71.4px">0,00</div>
<div class="cell g r" style="left:785px;width:73.1px;letter-spacing:0.35px">0,00</div>
<div class="cell r" style="left:860px;width:70.4px;top:-1px">-</div>
<div class="cell r" style="left:935px;width:95.4px;top:-1px">-</div>
<div class="cell r" style="left:1035px;width:96.4px;top:-1px">-</div>
</div>
<div style="left:0;top:167px;width:1136px;height:1px;background:#d2d2d2"></div>
<div class="row" style="top:168px;background:#ffffff">
<div class="cell" style="left:3.2px;letter-spacing:0.13px">04.12.2025 14:07:48</div>
<div class="cell r" style="left:160px;width:71.4px">59,26</div>
<div class="cell g r" style="left:235px;width:73.1px;letter-spacing:0.35px">53,27</div>
<div class="cell g r" style="left:310px;width:73.1px;letter-spacing:0.35px">5,99</div>
<div class="cell r" style="left:385px;width:71.4px">5,76</div>
<div class="cell g r" style="left:460px;width:73.1px;letter-spacing:0.35px">2,28</div>
<div class="cell g r" style="left:535px;width:98.1px;letter-spacing:0.35px">3,48</div>
<div class="cell r" style="left:635px;width:71.4px">0,00</div>
<div class="cell r" style="left:710px;width:71.4px">0,00</div>
<div class="cell g r" style="left:785px;width:73.1px;letter-spacing:0.35px">0,00</div>
<div class="cell r" style="left:860px;width:70.4px;top:-1px">-</div>
<div class="cell r" style="left:935px;width:95.4px;top:-1px">-</div>
<div class="cell r" style="left:1035px;width:96.4px;top:-1px">-</div>
</div>
<div style="left:0;top:188px;width:1136px;height:1px;background:#d2d2d2"></div>
<div class="row" style="top:189px;background:#ffffff">
<div class="cell" style="left:3.2px;letter-spacing:0.13px">04.12.2025 14:22:25</div>
<div class="cell r" style="left:160px;width:71.4px">59,39</div>
<div class="cell g r" style="left:235px;width:73.1px;letter-spacing:0.35px">53,28</div>
<div class="cell g r" style="left:310px;width:73.1px;letter-spacing:0.35px">6,11</div>
<div class="cell r" style="left:385px;width:71.4px">5,76</div>
<div class="cell g r" style="left:460px;width:73.1px;letter-spacing:0.35px">2,26</div>
<div class="cell g r" style="left:535px;width:98.1px;letter-spacing:0.35px">3,50</div>
<div class="cell r" style="left:635px;width:71.4px">0,00</div>
<div class="cell r" style="left:710px;width:71.4px">0,00</div>
<div class="cell g r" style="left:785px;width:73.1px;letter-spacing:0.35px">0,00</div>
<div class="cell r" style="left:860px;width:70.4px;top:-1px">-</div>
<div class="cell r" style="left:935px;width:95.4px;top:-1px">-</div>
<div class="cell r" style="left:1035px;width:96.4px;top:-1px">-</div>
</div>
<div style="left:0;top:209px;width:1136px;height:1px;background:#d2d2d2"></div>
<div class="row" style="top:210px;background:#ffffff">
<div class="cell" style="left:3.2px;letter-spacing:0.13px">04.12.2025 14:37:45</div>
<div class="cell r" style="left:160px;width:71.4px">59,49</div>
<div class="cell g r" style="left:235px;width:73.1px;letter-spacing:0.35px">53,34</div>
<div class="cell g r" style="left:310px;width:73.1px;letter-spacing:0.35px">6,15</div>
<div class="cell r" style="left:385px;width:71.4px">5,88</div>
<div class="cell g r" style="left:460px;width:73.1px;letter-spacing:0.35px">2,37</div>
<div class="cell g r" style="left:535px;width:98.1px;letter-spacing:0.35px">3,51</div>
<div class="cell r" style="left:635px;width:71.4px">0,00</div>
<div class="cell r" style="left:710px;width:71.4px">0,00</div>
<div class="cell g r" style="left:785px;width:73.1px;letter-spacing:0.35px">0,00</div>
<div class="cell r" style="left:860px;width:70.4px;top:-1px">-</div>
<div class="cell r" style="left:935px;width:95.4px;top:-1px">-</div>
<div class="cell r" style="left:1035px;width:96.4px;top:-1px">-</div>
</div>
<div style="left:0;top:230px;width:1136px;height:1px;background:#d2d2d2"></div>
<div class="row" style="top:231px;background:#ffffff">
<div class="cell" style="left:3.2px;letter-spacing:0.13px">04.12.2025 14:53:07</div>
<div class="cell r" style="left:160px;width:71.4px">59,63</div>
<div class="cell g r" style="left:235px;width:73.1px;letter-spacing:0.35px">53,37</div>
<div class="cell g r" style="left:310px;width:73.1px;letter-spacing:0.35px">6,26</div>
<div class="cell r" style="left:385px;width:71.4px">5,73</div>
<div class="cell g r" style="left:460px;width:73.1px;letter-spacing:0.35px">2,21</div>
<div class="cell g r" style="left:535px;width:98.1px;letter-spacing:0.35px">3,52</div>
<div class="cell r" style="left:635px;width:71.4px">0,00</div>
<div class="cell r" style="left:710px;width:71.4px">0,00</div>
<div class="cell g r" style="left:785px;width:73.1px;letter-spacing:0.35px">0,00</div>
<div class="cell r" style="left:860px;width:70.4px;top:-1px">-</div>
<div class="cell r" style="left:935px;width:95.4px;top:-1px">-</div>
<div class="cell r" style="left:1035px;width:96.4px;top:-1px">-</div>
</div>
<div style="left:0;top:251px;width:1136px;height:1px;background:#d2d2d2"></div>
<div class="row" style="top:252px;background:#ffffff">
<div class="cell" style="left:3.2px;letter-spacing:0.13px">04.12.2025 15:09:05</div>
<div class="cell r" style="left:160px;width:71.4px">59,68</div>
<div class="cell g r" style="left:235px;width:73.1px;letter-spacing:0.35px">53,41</div>
<div class="cell g r" style="left:310px;width:73.1px;letter-spacing:0.35px">6,27</div>
<div class="cell r" style="left:385px;width:71.4px">5,75</div>
<div class="cell g r" style="left:460px;width:73.1px;letter-spacing:0.35px">2,25</div>
<div class="cell g r" style="left:535px;width:98.1px;letter-spacing:0.35px">3,49</div>
<div class="cell r" style="left:635px;width:71.4px">0,00</div>
<div class="cell r" style="left:710px;width:71.4px">0,00</div>
<div class="cell g r" style="left:785px;width:73.1px;letter-spacing:0.35px">0,00</div>
<div class="cell r" style="left:860px;width:70.4px;top:-1px">-</div>
<div class="cell r" style="left:935px;width:95.4px;top:-1px">-</div>
<div class="cell r" style="left:1035px;width:96.4px;top:-1px">-</div>
</div>
<div style="left:0;top:272px;width:1136px;height:1px;background:#d2d2d2"></div>
<div class="row" style="top:273px;background:#ffffff">
<div class="cell" style="left:3.2px;letter-spacing:0.13px">04.12.2025 15:24:19</div>
<div class="cell r" style="left:160px;width:71.4px">59,81</div>
<div class="cell g r" style="left:235px;width:73.1px;letter-spacing:0.35px">53,49</div>
<div class="cell g r" style="left:310px;width:73.1px;letter-spacing:0.35px">6,32</div>
<div class="cell r" style="left:385px;width:71.4px">5,84</div>
<div class="cell g r" style="left:460px;width:73.1px;letter-spacing:0.35px">2,35</div>
<div class="cell g r" style="left:535px;width:98.1px;letter-spacing:0.35px">3,49</div>
<div class="cell r" style="left:635px;width:71.4px">0,00</div>
<div class="cell r" style="left:710px;width:71.4px">0,00</div>
<div class="cell g r" style="left:785px;width:73.1px;letter-spacing:0.35px">0,00</div>
<div class="cell r" style="left:860px;width:70.4px;top:-1px">-</div>
<div class="cell r" style="left:935px;width:95.4px;top:-1px">-</div>
<div class="cell r" style="left:1035px;width:96.4px;top:-1px">-</div>
</div>
<div style="left:0;top:293px;width:1136px;height:1px;background:#d2d2d2"></div>
<div class="row" style="top:294px;background:#ffffff">
<div class="cell" style="left:3.2px;letter-spacing:0.13px">04.12.2025 15:39:39</div>
<div class="cell r" style="left:160px;width:71.4px">59,74</div>
<div class="cell g r" style="left:235px;width:73.1px;letter-spacing:0.35px">53,53</div>
<div class="cell g r" style="left:310px;width:73.1px;letter-spacing:0.35px">6,21</div>
<div class="cell r" style="left:385px;width:71.4px">5,79</div>
<div class="cell g r" style="left:460px;width:73.1px;letter-spacing:0.35px">2,30</div>
<div class="cell g r" style="left:535px;width:98.1px;letter-spacing:0.35px">3,50</div>
<div class="cell r" style="left:635px;width:71.4px">0,00</div>
<div class="cell r" style="left:710px;width:71.4px">0,00</div>
<div class="cell g r" style="left:785px;width:73.1px;letter-spacing:0.35px">0,00</div>
<div class="cell r" style="left:860px;width:70.4px;top:-1px">-</div>
<div class="cell r" style="left:935px;width:95.4px;top:-1px">-</div>
<div class="cell r" style="left:1035px;width:96.4px;top:-1px">-</div>
</div>
<div style="left:0;top:314px;width:1136px;height:1px;background:#d2d2d2"></div>
<div class="row" style="top:315px;background:#ffffff">
<div class="cell" style="left:3.2px;letter-spacing:0.13px">04.12.2025 15:54:59</div>
<div class="cell r" style="left:160px;width:71.4px">59,85</div>
<div class="cell g r" style="left:235px;width:73.1px;letter-spacing:0.35px">53,63</div>
<div class="cell g r" style="left:310px;width:73.1px;letter-spacing:0.35px">6,22</div>
<div class="cell r" style="left:385px;width:71.4px">5,83</div>
<div class="cell g r" style="left:460px;width:73.1px;letter-spacing:0.35px">2,35</div>
<div class="cell g r" style="left:535px;width:98.1px;letter-spacing:0.35px">3,48</div>
<div class="cell r" style="left:635px;width:71.4px">0,00</div>
<div class="cell r" style="left:710px;width:71.4px">0,00</div>
<div class="cell g r" style="left:785px;width:73.1px;letter-spacing:0.35px">0,00</div>
<div class="cell r" style="left:860px;width:70.4px;top:-1px">-</div>
<div class="cell r" style="left:935px;width:95.4px;top:-1px">-</div>
<div class="cell r" style="left:1035px;width:96.4px;top:-1px">-</div>
</div>
<div style="left:0;top:335px;width:1136px;height:1px;background:#d2d2d2"></div>
<div class="row" style="top:336px;background:#ffffff">
<div class="cell" style="left:3.2px;letter-spacing:0.13px">04.12.2025 16:10:56</div>
<div class="cell r" style="left:160px;width:71.4px">60,01</div>
<div class="cell g r" style="left:235px;width:73.1px;letter-spacing:0.35px">53,70</div>
<div class="cell g r" style="left:310px;width:73.1px;letter-spacing:0.35px">6,31</div>
<div class="cell r" style="left:385px;width:71.4px">5,73</div>
<div class="cell g r" style="left:460px;width:73.1px;letter-spacing:0.35px">2,30</div>
<div class="cell g r" style="left:535px;width:98.1px;letter-spacing:0.35px">3,42</div>
<div class="cell r" style="left:635px;width:71.4px">0,00</div>
<div class="cell r" style="left:710px;width:71.4px">0,00</div>
<div class="cell g r" style="left:785px;width:73.1px;letter-spacing:0.35px">0,00</div>
<div class="cell r" style="left:860px;width:70.4px;top:-1px">-</div>
<div class="cell r" style="left:935px;width:95.4px;top:-1px">-</div>
<div class="cell r" style="left:1035px;width:96.4px;top:-1px">-</div>
</div>
<div style="left:0;top:356px;width:1136px;height:1px;background:#d2d2d2"></div>
<div class="row" style="top:357px;background:#ffffff">
<div class="cell g" style="left:3.2px;letter-spacing:0.22px">04.12.2025 16:10:57</div>
<div class="cell r" style="left:160px;width:70.4px;top:-1px">-</div>
<div class="cell g r" style="left:235px;width:73.1px;letter-spacing:0.35px">53,70</div>
<div class="cell g r" style="left:310px;width:73.1px;letter-spacing:0.35px">-53,70</div>
<div class="cell g r" style="left:385px;width:73.1px;letter-spacing:0.35px">6,00</div>
<div class="cell g r" style="left:460px;width:73.1px;letter-spacing:0.35px">2,30</div>
<div class="cell g r" style="left:535px;width:98.1px;letter-spacing:0.35px">3,70</div>
<div class="cell r" style="left:635px;width:70.4px;top:-1px">-</div>
<div class="cell r" style="left:710px;width:70.4px;top:-1px">-</div>
<div class="cell r" style="left:785px;width:70.4px;top:-1px">-</div>
<div class="cell r" style="left:860px;width:70.4px;top:-1px">-</div>
<div class="cell r" style="left:935px;width:95.4px;top:-1px">-</div>
<div class="cell r" style="left:1035px;width:96.4px;top:-1px">-</div>
</div>
<div style="left:0;top:377px;width:1136px;height:1px;background:#d2d2d2"></div>
<div class="row" style="top:378px;background:#ffffff">
<div class="cell" style="left:3.2px;letter-spacing:0.13px">04.12.2025 16:25:42</div>
<div class="cell r" style="left:160px;width:71.4px">60,06</div>
<div class="cell r" style="left:235px;width:71.4px">18,03</div>
<div class="cell r" style="left:310px;width:71.4px">42,04</div>
<div class="cell r" style="left:385px;width:71.4px">5,76</div>
<div class="cell r" style="left:460px;width:71.4px">0,02</div>
<div class="cell r" style="left:535px;width:96.4px">5,74</div>
<div class="cell r" style="left:635px;width:71.4px">0,00</div>
<div class="cell r" style="left:710px;width:71.4px">0,00</div>
<div class="cell g r" style="left:785px;width:73.1px;letter-spacing:0.35px">0,00</div>
<div class="cell r" style="left:860px;width:70.4px;top:-1px">-</div>
<div class="cell r" style="left:935px;width:95.4px;top:-1px">-</div>
<div class="cell r" style="left:1035px;width:96.4px;top:-1px">-</div>
</div>
<div style="left:0;top:398px;width:1136px;height:1px;background:#d2d2d2"></div>
<div class="row" style="top:399px;background:#ffffff">
<div class="cell" style="left:3.2px;letter-spacing:0.13px">04.12.2025 16:41:06</div>
<div class="cell r" style="left:160px;width:71.4px">60,20</div>
<div class="cell r" style="left:235px;width:71.4px">17,99</div>
<div class="cell r" style="left:310px;width:71.4px">42,20</div>
<div class="cell r" style="left:385px;width:71.4px">5,69</div>
<div class="cell r" style="left:460px;width:71.4px">0,02</div>
<div class="cell r" style="left:535px;width:96.4px">5,68</div>
<div class="cell r" style="left:635px;width:71.4px">0,00</div>
<div class="cell r" style="left:710px;width:71.4px">0,00</div>
<div class="cell g r" style="left:785px;width:73.1px;letter-spacing:0.35px">0,00</div>
<div class="cell r" style="left:860px;width:70.4px;top:-1px">-</div>
<div class="cell r" style="left:935px;width:95.4px;top:-1px">-</div>
<div class="cell r" style="left:1035px;width:96.4px;top:-1px">-</div>
</div>
<div style="left:0;top:419px;width:1136px;height:1px;background:#d2d2d2"></div>
<div class="row" style="top:420px;background:#ffffff">
<div class="cell" style="left:3.2px;letter-spacing:0.13px">04.12.2025 16:56:22</div>
<div class="cell r" style="left:160px;width:71.4px">60,24</div>
<div class="cell r" style="left:235px;width:71.4px">18,07</div>
<div class="cell r" style="left:310px;width:71.4px">42,17</div>
<div class="cell r" style="left:385px;width:71.4px">5,73</div>
<div class="cell r" style="left:460px;width:71.4px">0,02</div>
<div class="cell r" style="left:535px;width:96.4px">5,72</div>
<div class="cell r" style="left:635px;width:71.4px">0,00</div>
<div class="cell r" style="left:710px;width:71.4px">0,00</div>
<div class="cell g r" style="left:785px;width:73.1px;letter-spacing:0.35px">0,00</div>
<div class="cell r" style="left:860px;width:70.4px;top:-1px">-</div>
<div class="cell r" style="left:935px;width:95.4px;top:-1px">-</div>
<div class="cell r" style="left:1035px;width:96.4px;top:-1px">-</div>
</div>
<div style="left:0;top:440px;width:1136px;height:1px;background:#d2d2d2"></div>
<div class="row" style="top:441px;background:#c0c0c0">
<div class="cell" style="left:3.2px;letter-spacing:0.13px">04.12.2025 17:11:49</div>
<div class="cell r" style="left:160px;width:71.4px">60,39</div>
<div class="cell r" style="left:235px;width:71.4px">17,96</div>
<div class="cell r" style="left:310px;width:71.4px">42,43</div>
<div class="cell r" style="left:385px;width:71.4px">5,63</div>
<div class="cell r" style="left:460px;width:71.4px">0,02</div>
<div class="cell r" style="left:535px;width:96.4px">5,62</div>
<div class="cell r" style="left:635px;width:71.4px">0,00</div>
<div class="cell r" style="left:710px;width:71.4px">0,00</div>
<div class="cell g r" style="left:785px;width:73.1px;letter-spacing:0.35px">0,00</div>
<div class="cell r" style="left:860px;width:70.4px;top:-1px">-</div>
<div class="cell r" style="left:935px;width:95.4px;top:-1px">-</div>
<div class="cell r" style="left:1035px;width:96.4px;top:-1px">-</div>
</div>
<div style="left:0;top:461px;width:1136px;height:1px;background:#c0c0c0"></div>
<div class="row" style="top:462px;background:#ffffff">
<div class="cell" style="left:3.2px;letter-spacing:0.13px">04.12.2025 17:27:33</div>
<div class="cell r" style="left:160px;width:71.4px">60,45</div>
<div class="cell r" style="left:235px;width:71.4px">17,96</div>
<div class="cell r" style="left:310px;width:71.4px">42,48</div>
<div class="cell r" style="left:385px;width:71.4px">5,78</div>
<div class="cell r" style="left:460px;width:71.4px">0,02</div>
<div class="cell r" style="left:535px;width:96.4px">5,76</div>
<div class="cell r" style="left:635px;width:71.4px">0,00</div>
<div class="cell r" style="left:710px;width:71.4px">0,00</div>
<div class="cell g r" style="left:785px;width:73.1px;letter-spacing:0.35px">0,00</div>
<div class="cell r" style="left:860px;width:70.4px;top:-1px">-</div>
<div class="cell r" style="left:935px;width:95.4px;top:-1px">-</div>
<div class="cell r" style="left:1035px;width:96.4px;top:-1px">-</div>
</div>
<div style="left:0;top:482px;width:1136px;height:1px;background:#d2d2d2"></div>
<div class="row" style="top:483px;background:#ffffff">
<div class="cell" style="left:3.2px;letter-spacing:0.13px">04.12.2025 17:42:53</div>
<div class="cell r" style="left:160px;width:71.4px">60,53</div>
<div class="cell r" style="left:235px;width:71.4px">18,03</div>
<div class="cell r" style="left:310px;width:71.4px">42,50</div>
<div class="cell r" style="left:385px;width:71.4px">5,79</div>
<div class="cell r" style="left:460px;width:71.4px">0,02</div>
<div class="cell r" style="left:535px;width:96.4px">5,77</div>
<div class="cell r" style="left:635px;width:71.4px">0,00</div>
<div class="cell r" style="left:710px;width:71.4px">0,00</div>
<div class="cell g r" style="left:785px;width:73.1px;letter-spacing:0.35px">0,00</div>
<div class="cell r" style="left:860px;width:70.4px;top:-1px">-</div>
<div class="cell r" style="left:935px;width:95.4px;top:-1px">-</div>
<div class="cell r" style="left:1035px;width:96.4px;top:-1px">-</div>
</div>
<div style="left:0;top:503px;width:1136px;height:1px;background:#d2d2d2"></div>
<div class="row" style="top:504px;background:#ffffff">
<div class="cell" style="left:3.2px;letter-spacing:0.13px">04.12.2025 17:58:16</div>
<div class="cell r" style="left:160px;width:71.4px">60,55</div>
<div class="cell r" style="left:235px;width:71.4px">17,93</div>
<div class="cell r" style="left:310px;width:71.4px">42,63</div>
<div class="cell r" style="left:385px;width:71.4px">5,72</div>
<div class="cell r" style="left:460px;width:71.4px">0,02</div>
<div class="cell r" style="left:535px;width:96.4px">5,71</div>
<div class="cell r" style="left:635px;width:71.4px">0,00</div>
<div class="cell r" style="left:710px;width:71.4px">0,00</div>
<div class="cell g r" style="left:785px;width:73.1px;letter-spacing:0.35px">0,00</div>
<div class="cell r" style="left:860px;width:70.4px;top:-1px">-</div>
<div class="cell r" style="left:935px;width:95.4px;top:-1px">-</div>
<div class="cell r" style="left:1035px;width:96.4px;top:-1px">-</div>
</div>
<div style="left:0;top:524px;width:1136px;height:1px;background:#d2d2d2"></div>
<div class="row" style="top:525px;background:#ffffff">
<div class="cell" style="left:3.2px;letter-spacing:0.13px">04.12.2025 18:13:59</div>
<div class="cell r" style="left:160px;width:71.4px">60,82</div>
<div class="cell r" style="left:235px;width:71.4px">18,08</div>
<div class="cell r" style="left:310px;width:71.4px">42,74</div>
<div class="cell r" style="left:385px;width:71.4px">5,67</div>
<div class="cell r" style="left:460px;width:71.4px">0,02</div>
<div class="cell r" style="left:535px;width:96.4px">5,65</div>
<div class="cell r" style="left:635px;width:71.4px">0,00</div>
<div class="cell r" style="left:710px;width:71.4px">0,00</div>
<div class="cell g r" style="left:785px;width:73.1px;letter-spacing:0.35px">0,00</div>
<div class="cell r" style="left:860px;width:70.4px;top:-1px">-</div>
<div class="cell r" style="left:935px;width:95.4px;top:-1px">-</div>
<div class="cell r" style="left:1035px;width:96.4px;top:-1px">-</div>
</div>
<div style="left:0;top:545px;width:1136px;height:1px;background:#d2d2d2"></div>
<div class="row" style="top:546px;background:#ffffff">
<div class="cell" style="left:3.2px;letter-spacing:0.13px">04.12.2025 18:28:58</div>
<div class="cell r" style="left:160px;width:71.4px">60,94</div>
<div class="cell r" style="left:235px;width:71.4px">17,97</div>
<div class="cell r" style="left:310px;width:71.4px">42,97</div>
<div class="cell r" style="left:385px;width:71.4px">5,71</div>
<div class="cell r" style="left:460px;width:71.4px">0,02</div>
<div class="cell r" style="left:535px;width:96.4px">5,69</div>
<div class="cell r" style="left:635px;width:71.4px">0,00</div>
<div class="cell r" style="left:710px;width:71.4px">0,00</div>
<div class="cell g r" style="left:785px;width:73.1px;letter-spacing:0.35px">0,00</div>
<div class="cell r" style="left:860px;width:70.4px;top:-1px">-</div>
<div class="cell r" style="left:935px;width:95.4px;top:-1px">-</div>
<div class="cell r" style="left:1035px;width:96.4px;top:-1px">-</div>
</div>
<div style="left:0;top:566px;width:1136px;height:1px;background:#d2d2d2"></div>
<div class="row" style="top:567px;background:#ffffff">
<div class="cell" style="left:3.2px;letter-spacing:0.13px">04.12.2025 18:44:21</div>
<div class="cell r" style="left:160px;width:71.4px">61,07</div>
<div class="cell r" style="left:235px;width:71.4px">18,29</div>
<div class="cell r" style="left:310px;width:71.4px">42,78</div>
<div class="cell r" style="left:385px;width:71.4px">5,68</div>
<div class="cell r" style="left:460px;width:71.4px">0,02</div>
<div class="cell r" style="left:535px;width:96.4px">5,67</div>
<div class="cell r" style="left:635px;width:71.4px">0,00</div>
<div class="cell r" style="left:710px;width:71.4px">0,00</div>
<div class="cell g r" style="left:785px;width:73.1px;letter-spacing:0.35px">0,00</div>
<div class="cell r" style="left:860px;width:70.4px;top:-1px">-</div>
<div class="cell r" style="left:935px;width:95.4px;top:-1px">-</div>
<div class="cell r" style="left:1035px;width:96.4px;top:-1px">-</div>
</div>
<div style="left:0;top:587px;width:1136px;height:1px;background:#d2d2d2"></div>
<div class="row" style="top:588px;background:#ffffff">
<div class="cell" style="left:3.2px;letter-spacing:0.13px">04.12.2025 18:59:44</div>
<div class="cell r" style="left:160px;width:71.4px">60,77</div>
<div class="cell r" style="left:235px;width:71.4px">18,39</div>
<div class="cell r" style="left:310px;width:71.4px">42,38</div>
<div class="cell r" style="left:385px;width:71.4px">5,64</div>
<div class="cell r" style="left:460px;width:71.4px">0,02</div>
<div class="cell r" style="left:535px;width:96.4px">5,62</div>
<div class="cell r" style="left:635px;width:71.4px">0,00</div>
<div class="cell r" style="left:710px;width:71.4px">0,00</div>
<div class="cell g r" style="left:785px;width:73.1px;letter-spacing:0.35px">0,00</div>
<div class="cell r" style="left:860px;width:70.4px;top:-1px">-</div>
<div class="cell r" style="left:935px;width:95.4px;top:-1px">-</div>
<div class="cell r" style="left:1035px;width:96.4px;top:-1px">-</div>
</div>
<div style="left:0;top:608px;width:1136px;height:1px;background:#d2d2d2"></div>
<div class="row" style="top:609px;background:#ffffff">
<div class="cell" style="left:3.2px;letter-spacing:0.13px">04.12.2025 19:15:28</div>
<div class="cell r" style="left:160px;width:71.4px">60,87</div>
<div class="cell r" style="left:235px;width:71.4px">18,56</div>
<div class="cell r" style="left:310px;width:71.4px">42,30</div>
<div class="cell r" style="left:385px;width:71.4px">5,60</div>
<div class="cell r" style="left:460px;width:71.4px">0,02</div>
<div class="cell r" style="left:535px;width:96.4px">5,59</div>
<div class="cell r" style="left:635px;width:71.4px">0,00</div>
<div class="cell r" style="left:710px;width:71.4px">0,00</div>
<div class="cell g r" style="left:785px;width:73.1px;letter-spacing:0.35px">0,00</div>
<div class="cell r" style="left:860px;width:70.4px;top:-1px">-</div>
<div class="cell r" style="left:935px;width:95.4px;top:-1px">-</div>
<div class="cell r" style="left:1035px;width:96.4px;top:-1px">-</div>
</div>
<div style="left:0;top:629px;width:1136px;height:1px;background:#d2d2d2"></div>
<div class="row" style="top:630px;background:#ffffff">
<div class="cell" style="left:3.2px;letter-spacing:0.13px">04.12.2025 19:30:49</div>
<div class="cell r" style="left:160px;width:71.4px">61,08</div>
<div class="cell r" style="left:235px;width:71.4px">18,41</div>
<div class="cell r" style="left:310px;width:71.4px">42,67</div>
<div class="cell r" style="left:385px;width:71.4px">5,70</div>
<div class="cell r" style="left:460px;width:71.4px">0,02</div>
<div class="cell r" style="left:535px;width:96.4px">5,68</div>
<div class="cell r" style="left:635px;width:71.4px">0,00</div>
<div class="cell r" style="left:710px;width:71.4px">0,00</div>
<div class="cell g r" style="left:785px;width:73.1px;letter-spacing:0.35px">0,00</div>
<div class="cell r" style="left:860px;width:70.4px;top:-1px">-</div>
<div class="cell r" style="left:935px;width:95.4px;top:-1px">-</div>
<div class="cell r" style="left:1035px;width:96.4px;top:-1px">-</div>
</div>
<div style="left:0;top:650px;width:1136px;height:1px;background:#d2d2d2"></div>
<div class="row" style="top:651px;background:#ffffff">
<div class="cell" style="left:3.2px;letter-spacing:0.13px">04.12.2025 19:46:13</div>
<div class="cell r" style="left:160px;width:71.4px">61,14</div>
<div class="cell r" style="left:235px;width:71.4px">18,59</div>
<div class="cell r" style="left:310px;width:71.4px">42,54</div>
<div class="cell r" style="left:385px;width:71.4px">5,69</div>
<div class="cell r" style="left:460px;width:71.4px">0,02</div>
<div class="cell r" style="left:535px;width:96.4px">5,67</div>
<div class="cell r" style="left:635px;width:71.4px">0,00</div>
<div class="cell r" style="left:710px;width:71.4px">0,00</div>
<div class="cell g r" style="left:785px;width:73.1px;letter-spacing:0.35px">0,00</div>
<div class="cell r" style="left:860px;width:70.4px;top:-1px">-</div>
<div class="cell r" style="left:935px;width:95.4px;top:-1px">-</div>
<div class="cell r" style="left:1035px;width:96.4px;top:-1px">-</div>
</div>
<div style="left:0;top:671px;width:1136px;height:1px;background:#d2d2d2"></div>
<div class="row" style="top:672px;background:#ffffff">
<div class="cell" style="left:3.2px;letter-spacing:0.13px">04.12.2025 20:01:53</div>
<div class="cell r" style="left:160px;width:71.4px">60,98</div>
<div class="cell r" style="left:235px;width:71.4px">18,61</div>
<div class="cell r" style="left:310px;width:71.4px">42,37</div>
<div class="cell r" style="left:385px;width:71.4px">5,66</div>
<div class="cell r" style="left:460px;width:71.4px">0,02</div>
<div class="cell r" style="left:535px;width:96.4px">5,64</div>
<div class="cell r" style="left:635px;width:71.4px">0,00</div>
<div class="cell r" style="left:710px;width:71.4px">0,00</div>
<div class="cell g r" style="left:785px;width:73.1px;letter-spacing:0.35px">0,00</div>
<div class="cell r" style="left:860px;width:70.4px;top:-1px">-</div>
<div class="cell r" style="left:935px;width:95.4px;top:-1px">-</div>
<div class="cell r" style="left:1035px;width:96.4px;top:-1px">-</div>
</div>
<div style="left:0;top:692px;width:1136px;height:1px;background:#d2d2d2"></div>
<div class="row" style="top:693px;background:#ffffff">
<div class="cell" style="left:3.2px;letter-spacing:0.13px">04.12.2025 20:17:08</div>
<div class="cell r" style="left:160px;width:71.4px">60,95</div>
<div class="cell r" style="left:235px;width:71.4px">18,35</div>
<div class="cell r" style="left:310px;width:71.4px">42,60</div>
<div class="cell r" style="left:385px;width:71.4px">5,68</div>
<div class="cell r" style="left:460px;width:71.4px">0,02</div>
<div class="cell r" style="left:535px;width:96.4px">5,66</div>
<div class="cell r" style="left:635px;width:71.4px">0,00</div>
<div class="cell r" style="left:710px;width:71.4px">0,00</div>
<div class="cell g r" style="left:785px;width:73.1px;letter-spacing:0.35px">0,00</div>
<div class="cell r" style="left:860px;width:70.4px;top:-1px">-</div>
<div class="cell r" style="left:935px;width:95.4px;top:-1px">-</div>
<div class="cell r" style="left:1035px;width:96.4px;top:-1px">-</div>
</div>
<div style="left:0;top:713px;width:1136px;height:1px;background:#d2d2d2"></div>
<div class="row" style="top:714px;background:#ffffff">
<div class="cell" style="left:3.2px;letter-spacing:0.13px">04.12.2025 20:32:13</div>
<div class="cell r" style="left:160px;width:71.4px">61,03</div>
<div class="cell r" style="left:235px;width:71.4px">18,41</div>
<div class="cell r" style="left:310px;width:71.4px">42,62</div>
<div class="cell r" style="left:385px;width:71.4px">5,69</div>
<div class="cell r" style="left:460px;width:71.4px">0,02</div>
<div class="cell r" style="left:535px;width:96.4px">5,67</div>
<div class="cell r" style="left:635px;width:71.4px">0,00</div>
<div class="cell r" style="left:710px;width:71.4px">0,00</div>
<div class="cell g r" style="left:785px;width:73.1px;letter-spacing:0.35px">0,00</div>
<div class="cell r" style="left:860px;width:70.4px;top:-1px">-</div>
<div class="cell r" style="left:935px;width:95.4px;top:-1px">-</div>
<div class="cell r" style="left:1035px;width:96.4px;top:-1px">-</div>
</div>
<div style="left:0;top:734px;width:1136px;height:1px;background:#d2d2d2"></div>
<div class="row" style="top:735px;background:#ffffff">
<div class="cell" style="left:3.2px;letter-spacing:0.13px">04.12.2025 20:47:35</div>
<div class="cell r" style="left:160px;width:71.4px">61,14</div>
<div class="cell r" style="left:235px;width:71.4px">18,34</div>
<div class="cell r" style="left:310px;width:71.4px">42,80</div>
<div class="cell r" style="left:385px;width:71.4px">5,70</div>
<div class="cell r" style="left:460px;width:71.4px">0,02</div>
<div class="cell r" style="left:535px;width:96.4px">5,68</div>
<div class="cell r" style="left:635px;width:71.4px">0,00</div>
<div class="cell r" style="left:710px;width:71.4px">0,00</div>
<div class="cell g r" style="left:785px;width:73.1px;letter-spacing:0.35px">0,00</div>
<div class="cell r" style="left:860px;width:70.4px;top:-1px">-</div>
<div class="cell r" style="left:935px;width:95.4px;top:-1px">-</div>
<div class="cell r" style="left:1035px;width:96.4px;top:-1px">-</div>
</div>
<div style="left:0;top:755px;width:1136px;height:1px;background:#d2d2d2"></div>
<div style="left:160px;top:0;width:1px;height:751px;background:#d2d2d2"></div>
<div style="left:235px;top:0;width:1px;height:751px;background:#d2d2d2"></div>
<div style="left:310px;top:0;width:1px;height:751px;background:#d2d2d2"></div>
<div style="left:385px;top:0;width:1px;height:751px;background:#d2d2d2"></div>
<div style="left:460px;top:0;width:1px;height:751px;background:#d2d2d2"></div>
<div style="left:535px;top:0;width:1px;height:751px;background:#d2d2d2"></div>
<div style="left:635px;top:0;width:1px;height:751px;background:#d2d2d2"></div>
<div style="left:710px;top:0;width:1px;height:751px;background:#d2d2d2"></div>
<div style="left:785px;top:0;width:1px;height:751px;background:#d2d2d2"></div>
<div style="left:860px;top:0;width:1px;height:751px;background:#d2d2d2"></div>
<div style="left:935px;top:0;width:1px;height:751px;background:#d2d2d2"></div>
<div style="left:1035px;top:0;width:1px;height:751px;background:#d2d2d2"></div>
</div>
<div style="left:244px;top:978px;width:1136px;height:1px;background:#d2d2d2;"></div>
<div style="left:1381px;top:182px;width:14px;height:46px;background:#f8f8f8;"></div>
<div style="left:1380px;top:980px;width:15px;height:35px;background:#ffffff;"></div>
<div style="left:1380px;top:228px;width:15px;height:750px;background:#808080;"></div>
<div style="left:244px;top:980px;width:1151px;height:35px;background:#ffffff;"></div>
<div style="left:250px;top:985px;width:153px;height:24px;background:#efefef;"></div>
<div style="top:990.63px;height:14px;line-height:14px;color:#333;left:365.55px;letter-spacing:0.253px;">Итого:</div>
<div style="left:406px;top:985px;width:72px;height:24px;background:#efefef;"></div>
<div style="left:481px;top:985px;width:72px;height:24px;background:#efefef;"></div>
<div style="left:556px;top:985px;width:72px;height:24px;background:#efefef;"></div>
<div style="left:631px;top:985px;width:72px;height:24px;background:#efefef;"></div>
<div style="left:706px;top:985px;width:72px;height:24px;background:#efefef;"></div>
<div style="left:781px;top:985px;width:97px;height:24px;background:#efefef;"></div>
<div style="left:881px;top:985px;width:72px;height:24px;background:#efefef;"></div>
<div class="r" style="left:881px;top:990px;width:68.4px;color:#333">-</div>
<div style="left:956px;top:985px;width:72px;height:24px;background:#efefef;"></div>
<div class="r" style="left:956px;top:990px;width:68.4px;color:#333">-</div>
<div style="left:1031px;top:985px;width:72px;height:24px;background:#efefef;"></div>
<div class="r" style="left:1031px;top:990px;width:68.4px;color:#333">-</div>
<div style="left:1106px;top:985px;width:72px;height:24px;background:#efefef;"></div>
<div class="r" style="left:1106px;top:990px;width:68.4px;color:#333">-</div>
<div style="left:1181px;top:985px;width:97px;height:24px;background:#efefef;"></div>
<div class="r" style="left:1181px;top:990px;width:93.4px;color:#333">-</div>
<div style="left:1281px;top:985px;width:98px;height:24px;background:#efefef;"></div>
<div class="r" style="left:1281px;top:990px;width:94.4px;color:#333">-</div>
<div style="left:57px;top:1015px;width:1338px;height:2px;background:#a6a6a6;"></div>
<div style="left:57px;top:1017px;width:1338px;height:1px;background:#f4f4f4;"></div>
<div style="left:57px;top:1018px;width:1338px;height:1px;background:#dedede;"></div>
<div style="left:57px;top:1019px;width:1338px;height:21px;background:#f0f0f0;"></div>
<div style="top:1022.13px;height:14px;line-height:14px;color:#333;left:80.15px;letter-spacing:-0.018px;">673</div>
<div style="top:1022.13px;height:14px;line-height:14px;color:#333;left:222.15px;letter-spacing:-0.096px;">- После насосной (от микрорайонов)</div>
<div style="top:1022.13px;height:14px;line-height:14px;color:#333;left:421.35px;letter-spacing:0.269px;">РД=1, РЧ=0</div>
<div style="top:1022.13px;height:14px;line-height:14px;color:#333;left:504.55px;letter-spacing:-0.076px;">СПТ944 #14865</div>
<div style="top:1022.13px;height:14px;line-height:14px;color:#333;left:604.55px;letter-spacing:0.039px;">Потребление с 30.11.2025 05:00 по 05.12.2025 23:00</div>
<div style="left:494px;top:1021px;width:1px;height:17px;background:#d0d0d0;"></div>
<div style="left:594px;top:1021px;width:1px;height:17px;background:#d0d0d0;"></div>
<div style="left:57px;top:1040px;width:1338px;height:4px;background:#000000;"></div>
<div style="left:352px;top:1040px;width:48px;height:4px;background:#2c2c2c;"></div>
<svg style="left:0;top:0" width="1395" height="1044" viewBox="0 0 1395 1044"><defs><filter id="sh" x="-5%" y="-5%" width="110%" height="110%"><feDropShadow dx="2.5" dy="2.5" stdDeviation="2" flood-color="#000" flood-opacity="0.5"/></filter></defs><g filter="url(#sh)"><rect x="401.5" y="177.5" width="494" height="819" stroke="#fb4044" stroke-width="3" fill="none"/></g><g filter="url(#sh)" stroke="#fb4044" fill="none" stroke-linecap="round"><path d="M843 14.5 L932 20" stroke-width="16"/><path d="M226 167 L242 170" stroke-width="16"/><path d="M347 167 L1207 168" stroke-width="16"/><path d="M120 1030 L209.5 1030" stroke-width="16"/></g><g filter="url(#sh)"><path d="M1174 595 L1359 600" stroke="#fb4044" stroke-width="10" stroke-linecap="round" fill="none"/><path d="M1144.5 594 L1174.5 580 L1173.5 609.5 Z" fill="#fb4044"/></g></svg>
</body></html>
